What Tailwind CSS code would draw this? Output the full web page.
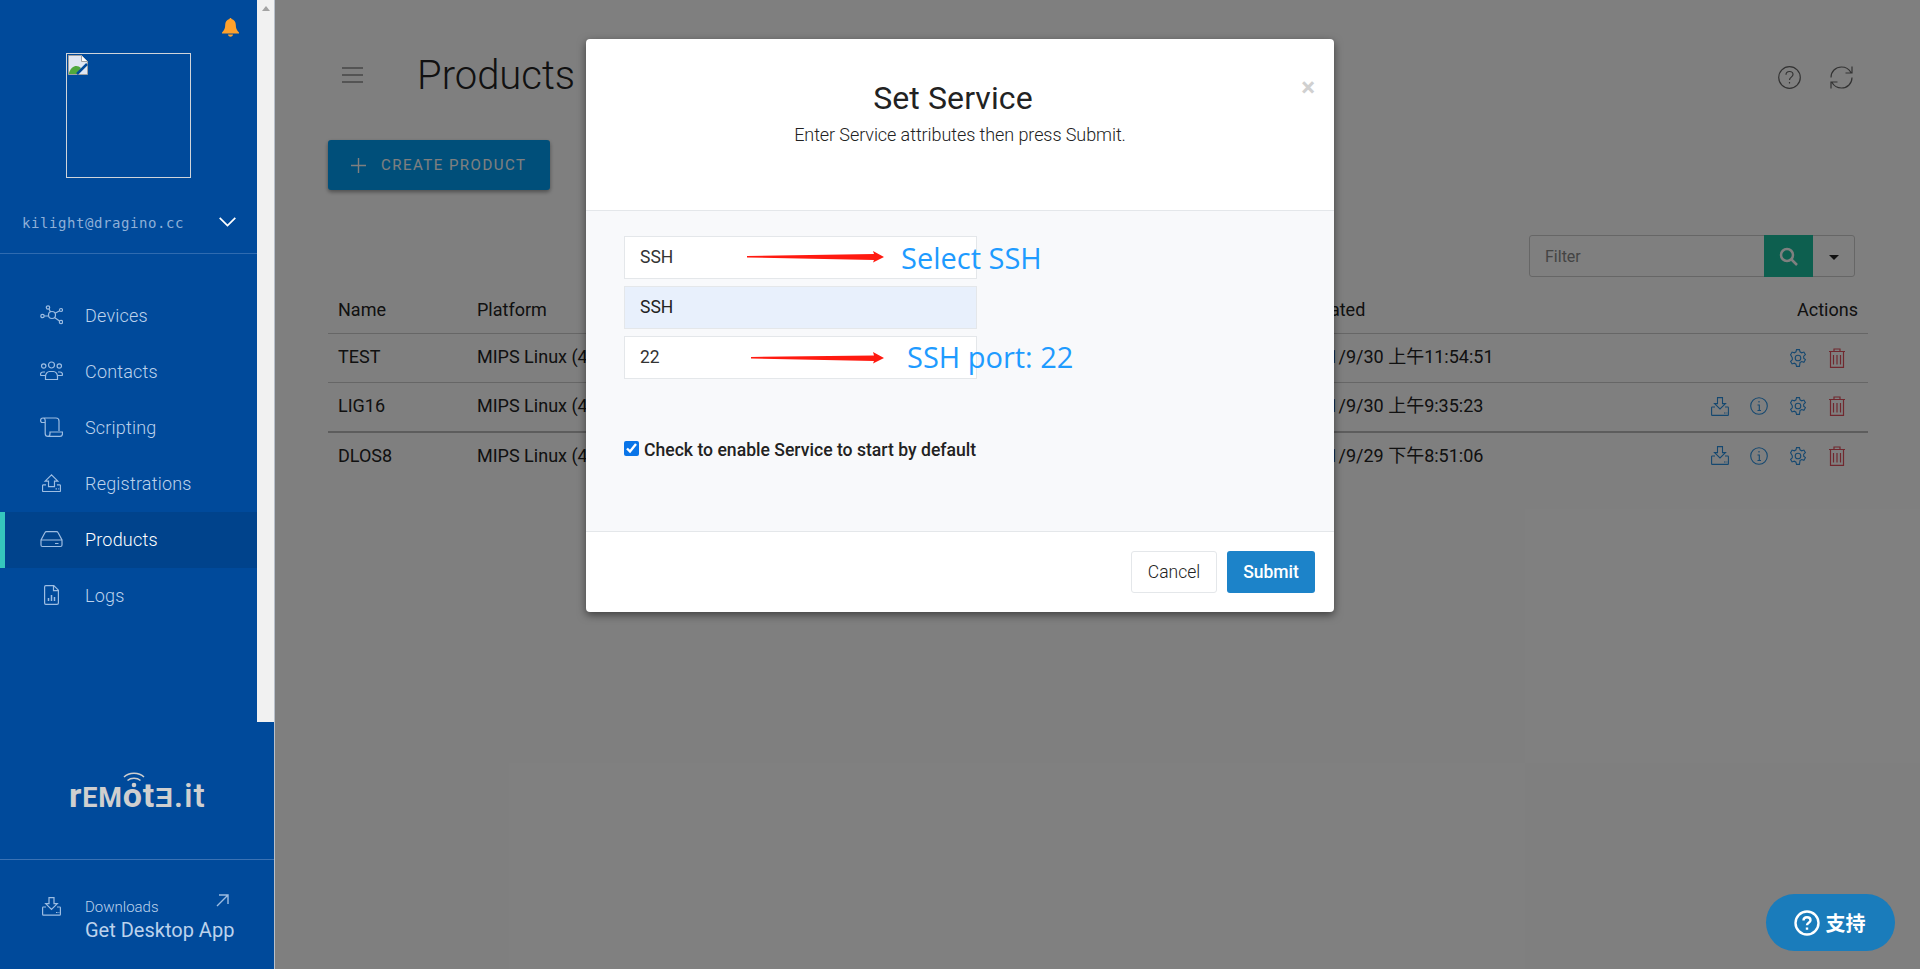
<!DOCTYPE html>
<html lang="en" class="h-[969px] overflow-hidden">
<head>
  <meta charset="UTF-8" />
  <title>Products</title>
  <script src="https://cdn.jsdelivr.net/npm/@tailwindcss/browser@4"></script>
</head>
<body class="h-[969px] bg-white text-[#222] font-['Roboto',sans-serif] overflow-hidden">
<div class="relative flex h-[969px] w-[1920px] overflow-hidden">

  <!-- sidebar -->
  <aside class="flex h-full w-[275px] shrink-0 flex-col bg-[#004a9b] border-r border-[#b8c0ca]">
    <div class="flex h-[722px] shrink-0">
      <div class="w-[257px] shrink-0">
        <div class="flex h-[53px] justify-end pr-[18px] pt-[18px]">
          <svg class="h-[19px] w-[17px]" viewBox="0 0 17 19" fill="#ffa12b"><path d="M8.500 0c.7 0 1 .5 1 1.100C12 1.700 13.800 3.900 13.800 6.800c0 3.600.8 5.200 3.200 7.600v1.100H0v-1.100c2.400-2.400 3.200-4 3.200-7.600 0-2.900 1.800-5.100 4.300-5.700 0-.6.300-1.100 1-1.100z"/><path d="M6 16.500h5c0 1.200-1 2.200-2.500 2.200S6 17.700 6 16.500z"/></svg>
        </div>
        <div class="ml-[66px] h-[125px] w-[125px] border border-[#d0d4da] p-[1px]">
          <svg width="20" height="20" viewBox="0 0 20 20"><path d="M.5.5h13l6 6v13H.5z" fill="#dfe6f2" stroke="#a0a0a0"/><path d="M13.500.5v6h6" fill="#fff" stroke="#a0a0a0"/><path d="M1 18c2-7 8-9 12-5l-4 6H1z" fill="#4fa83d"/><path d="M9 19l10-10" stroke="#004a9b" stroke-width="2.500"/></svg>
        </div>
        <div class="flex h-[75px] items-center justify-between pl-[22px] pr-[21px] pt-[14px]">
          <span class="font-['DejaVu_Sans_Mono',monospace] text-[14px] tracking-[0.57px] text-[#8fb0d8] mt-[2px]">kilight@dragino.cc</span>
          <svg class="mb-[2px] h-[10px] w-[17px]" viewBox="0 0 17 10" fill="none" stroke="#fff" stroke-width="1.700"><path d="M.7.8l7.800 7.800L16.300.8"/></svg>
        </div>
        <div class="h-px bg-[#2f6bb0]"></div>

        <nav class="mt-[34px] flex flex-col text-[18px] font-light tracking-[0.2px] text-[#bcd2ec]">
          <a class="flex h-[56px] items-center pb-[2px] pl-[40px]">
            <svg class="mr-[22px] h-[20px] w-[23px]" viewBox="0 0 23 20" fill="none" stroke="#9dbde2" stroke-width="1.200"><circle cx="12" cy="10" r="3.500"/><circle cx="8" cy="2.500" r="1.700"/><circle cx="21" cy="5" r="1.500"/><circle cx="21" cy="17" r="1.700"/><circle cx="2.500" cy="11" r="1.700"/><path d="M9 4l1.500 3M19.700 5.800L15 8.300M19.500 16l-5-3.500M4.200 11h4.300"/></svg>
            Devices
          </a>
          <a class="flex h-[56px] items-center pb-[2px] pl-[40px]">
            <svg class="mr-[22px] h-[20px] w-[23px]" viewBox="0 0 23 20" fill="none" stroke="#9dbde2" stroke-width="1.200"><circle cx="11.500" cy="4" r="3"/><circle cx="3.700" cy="5" r="2.200"/><circle cx="19.300" cy="5" r="2.200"/><path d="M5.500 18.500v-3c0-3 2-5 4-5h4c2 0 4 2 4 5v3zM5 11H3c-1.500 0-2.500 1-2.500 2.500 0 0 0 1 1 1h4M18 11h2c1.500 0 2.500 1 2.500 2.500 0 0 0 1-1 1h-4"/></svg>
            Contacts
          </a>
          <a class="flex h-[56px] items-center pb-[2px] pl-[40px]">
            <svg class="mr-[22px] h-[20px] w-[23px]" viewBox="0 0 23 20" fill="none" stroke="#9dbde2" stroke-width="1.200"><path d="M3 1h13c2 0 3 1.500 3 3v10M3 1C1.500 1 .6 2 .6 3.500c0 1 .6 2 1.600 2H5M3 1c1.500 0 2.200 1.300 2.200 2.500V16.500c0 1.500 1 2.900 2.800 2.900h12c1.800 0 2.500-1.500 2.500-2.900V15H10v1.500c0 1.500-.7 2.900-2 2.900"/></svg>
            Scripting
          </a>
          <a class="flex h-[56px] items-center pb-[2px] pl-[42px]">
            <svg class="mr-[24px] h-[20px] w-[19px]" viewBox="0 0 21 20" fill="none" stroke="#9dbde2" stroke-width="1.300"><path d="M10.500 1L3.500 8h3.700v6h6.600V8h3.700z"/><path d="M4.500 12H1.500C1 12 .6 12.500.6 13v5.500c0 .5.400.9.900.9h18c.5 0 .9-.4.900-.9V13c0-.5-.4-1-.9-1h-3"/><path d="M15 16.500h1.500M18 16.500h1"/></svg>
            Registrations
          </a>
          <a class="relative flex h-[56px] items-center bg-[#00438c] pb-[2px] pl-[40px] text-white">
            <span class="absolute left-0 top-0 h-full w-[5px] bg-[#35c7bd]"></span>
            <svg class="mr-[22px] h-[20px] w-[23px]" viewBox="0 0 23 20" fill="none" stroke="#9dbde2" stroke-width="1.200"><path d="M1 11L5 3.500c.3-.6.800-.9 1.500-.9h10c.7 0 1.200.3 1.500.9l4 7.500v5c0 1-.8 1.500-1.500 1.500h-18C1.800 17.500 1 17 1 16zM1 11h21M15 14.500h3.500"/></svg>
            Products
          </a>
          <a class="flex h-[56px] items-center pb-[2px] pl-[44px]">
            <svg class="mr-[26px] h-[20px] w-[15px]" viewBox="0 0 15 20" fill="none" stroke="#9dbde2" stroke-width="1.200"><path d="M1.800.6h8l4.600 4.600v12.700c0 .8-.6 1.400-1.400 1.400H1.800c-.7 0-1.200-.6-1.200-1.400V2c0-.8.500-1.400 1.200-1.400zM9.500.6v5h5"/><path d="M4.500 16v-3M7.500 16v-6M10.500 16v-4" stroke-width="1.500"/></svg>
            Logs
          </a>
        </nav>
      </div>
      <div class="relative w-[18px] bg-[#f1f1f1]">
        <span class="absolute left-[5px] top-[6px] h-0 w-0 border-x-[4px] border-b-[5px] border-x-transparent border-b-[#a3a3a3]"></span>
      </div>
    </div>

    <div class="flex flex-1 flex-col">
      <div class="flex h-[137px] shrink-0 items-start pl-[69px] pt-[53px]">
        <div class="relative flex items-baseline font-bold leading-[40px] tracking-[0.800px] text-[#cfcfcf]">
          <svg class="absolute left-[54px] top-[-4px] h-[19px] w-[22px]" viewBox="0 0 22 19" fill="none" stroke="#cfcfcf" stroke-width="1.500"><path d="M1 6c5-5 15-5 20 0M4.500 9.500c3.500-3 9.500-3 13 0"/><circle cx="11" cy="14" r="2.300" fill="#cfcfcf" stroke="none"/></svg>
          <span class="text-[34px]">r</span><span class="text-[27px]">EM</span><span class="text-[34px]">ot</span><span class="text-[27px]">Ǝ</span><span class="text-[34px] font-medium">.it</span>
        </div>
      </div>
      <div class="h-px bg-[#3a72b4]"></div>
      <div class="relative flex pl-[42px] pt-[37px]">
        <svg class="mr-[24px] h-[19px] w-[19px]" viewBox="0 0 19 19" fill="none" stroke="#9dbde2" stroke-width="1.200"><path d="M7 .7h5v6h3.300L9.500 12.500 3.700 6.700H7z"/><path d="M4 10H1.300c-.4 0-.7.400-.7.800v6.500c0 .5.300.9.800.9h16.200c.5 0 .8-.4.800-.9v-6.500c0-.4-.3-.8-.7-.8H15M14 15.500h1.500M16.500 15.500h.8"/></svg>
        <div class="flex flex-col text-[#bcd2ec]">
          <span class="text-[15px] font-light leading-[20px]">Downloads</span>
          <span class="text-[20px] leading-[26px]">Get Desktop App</span>
        </div>
        <svg class="absolute left-[216px] top-[34px] h-[13px] w-[13px]" viewBox="0 0 13 13" fill="none" stroke="#9dbde2" stroke-width="1.400"><path d="M1 12L12 1M3 1h9v9"/></svg>
      </div>
    </div>
  </aside>

  <!-- page under the dialog -->
  <main class="w-[1645px] pl-[53px] pr-[52px] pt-[50px]">
    <div class="flex h-[50px] items-center">
      <svg class="ml-[14px] h-[16px] w-[21px]" viewBox="0 0 21 16" stroke="#555" stroke-width="1.200"><path d="M0 1h21M0 8h21M0 15h21"/></svg>
      <h1 class="ml-[54px] mt-[2px] text-[40px] font-light">Products</h1>
      <div class="ml-auto mr-[15px] mt-[4px] flex items-center gap-[29px]">
        <svg class="h-[23px] w-[23px]" viewBox="0 0 23 23" fill="none" stroke="#666" stroke-width="1.200"><circle cx="11.500" cy="11.500" r="10.800"/><path d="M8 8.800c0-2 1.500-3.300 3.500-3.300s3.500 1.300 3.500 3c0 2.800-3.500 2.500-3.500 5.500M11.500 16v1.500"/></svg>
        <svg class="h-[23px] w-[23px]" viewBox="0 0 23 23" fill="none" stroke="#666" stroke-width="1.200"><path d="M1 11.500C1 5.500 5.500 1 11.500 1c4 0 7.500 2 9.500 5.500M22 11.500c0 6-4.500 10.500-10.500 10.500-4 0-7.500-2-9.500-5.500M22 .5v6.500h-6.500M1 22.500V16h6.500"/></svg>
      </div>
    </div>

    <button class="mt-[40px] flex h-[50px] w-[222px] items-center rounded-[3px] bg-[#019ff5] pl-[23px] text-white shadow-[0_2px_4px_rgba(0,0,0,0.4)]">
      <svg class="mr-[15px] h-[15px] w-[15px]" viewBox="0 0 15 15" stroke="#fff" stroke-width="1.400"><path d="M7.500 0v15M0 7.500h15"/></svg>
      <span class="text-[15px] tracking-[1.480px]">CREATE PRODUCT</span>
    </button>

    <div class="mt-[45px] flex justify-end pr-[13px]">
      <div class="flex h-[42px] w-[326px] rounded-[3px] border border-[#ccc]">
        <div class="flex-1 pl-[15px] pt-[1px] text-[16px] leading-[40px] text-[#888]">Filter</div>
        <div class="mt-[-1px] flex h-[42px] w-[49px] items-center justify-center bg-[#1abe9e]">
          <svg class="h-[19px] w-[19px]" viewBox="0 0 19 19" fill="none" stroke="#fff" stroke-width="2.500"><circle cx="8" cy="8" r="6"/><path d="M12.500 12.500l5.500 5.500"/></svg>
        </div>
        <div class="flex w-[41px] items-center justify-center pt-[2px]">
          <span class="h-0 w-0 border-x-[5px] border-t-[5px] border-x-transparent border-t-[#222]"></span>
        </div>
      </div>
    </div>

    <div class="text-[18px]">
      <div class="grid h-[57px] grid-cols-[139px_821px_1fr_auto] items-end border-b border-[#ccc] px-[10px] pb-[10px]">
        <span>Name</span><span>Platform</span><span>Updated</span><span>Actions</span>
      </div>
      <div class="grid h-[49px] grid-cols-[139px_821px_1fr_auto] items-center border-b border-[#ccc] pb-[4px] pl-[10px] pr-[12px]">
        <span>TEST</span><span>MIPS Linux (4.14)</span><span class="font-['Roboto','Noto_Sans_CJK_SC',sans-serif]">2021/9/30 上午11:54:51</span>
        <div class="mt-[4px] flex h-[20px] w-[157px] items-center justify-end">
          <span class="flex w-[39px] justify-center"><svg class="h-[18px] w-[18px]" viewBox="0 0 17 18" fill="none" stroke="#2a90e0" stroke-width="1.100"><path d="M7 .6h3l.5 2.200 1.700 1 2.200-.7 1.500 2.600-1.700 1.500v2l1.700 1.500-1.500 2.600-2.200-.7-1.700 1L10 17.400H7l-.5-2.200-1.700-1-2.200.7-1.500-2.600 1.700-1.500v-2L1.100 5.700l1.500-2.600 2.200.7 1.700-1z"/><circle cx="8.500" cy="9" r="2.800"/></svg></span>
          <span class="flex w-[39px] justify-center"><svg class="h-[20px] w-[16px]" viewBox="0 0 16 20" fill="none" stroke="#e0505c" stroke-width="1.200"><path d="M0 3.500h16M5 3.500V1h6v2.500M1.500 3.500v15.900h13V3.500M4.500 7v9.500M8 7v9.500M11.500 7v9.500"/></svg></span>
        </div>
      </div>
      <div class="grid h-[50px] grid-cols-[139px_821px_1fr_auto] items-center border-b-2 border-[#bbb] pb-[4px] pl-[10px] pr-[12px]">
        <span>LIG16</span><span>MIPS Linux (4.14)</span><span class="font-['Roboto','Noto_Sans_CJK_SC',sans-serif]">2021/9/30 上午9:35:23</span>
        <div class="mt-[2px] flex h-[20px] w-[157px] items-center justify-end">
          <span class="flex w-[39px] justify-center"><svg class="h-[19px] w-[18px]" viewBox="0 0 18 19" fill="none" stroke="#2a90e0" stroke-width="1.100"><path d="M6.500.6h5v6h3L9 12 3.500 6.600h3z"/><path d="M4 10H1.200c-.4 0-.6.300-.6.700v7c0 .4.200.7.600.7h15.600c.4 0 .6-.3.600-.7v-7c0-.4-.2-.7-.6-.7H14M13 16h1.500M15.500 16h.8"/></svg></span>
          <span class="flex w-[39px] justify-center"><svg class="h-[18px] w-[18px]" viewBox="0 0 18 18" fill="none" stroke="#2a90e0" stroke-width="1.100"><circle cx="9" cy="9" r="8.300"/><path d="M9 4v1.500M7.500 8H9.300v5.500M7.500 13.500h3.500"/></svg></span>
          <span class="flex w-[39px] justify-center"><svg class="h-[18px] w-[18px]" viewBox="0 0 17 18" fill="none" stroke="#2a90e0" stroke-width="1.100"><path d="M7 .6h3l.5 2.200 1.700 1 2.200-.7 1.500 2.600-1.700 1.500v2l1.700 1.500-1.500 2.600-2.200-.7-1.700 1L10 17.400H7l-.5-2.200-1.700-1-2.200.7-1.500-2.600 1.700-1.500v-2L1.100 5.700l1.500-2.600 2.200.7 1.700-1z"/><circle cx="8.500" cy="9" r="2.800"/></svg></span>
          <span class="flex w-[39px] justify-center"><svg class="h-[20px] w-[16px]" viewBox="0 0 16 20" fill="none" stroke="#e0505c" stroke-width="1.200"><path d="M0 3.500h16M5 3.500V1h6v2.500M1.500 3.500v15.900h13V3.500M4.500 7v9.500M8 7v9.500M11.500 7v9.500"/></svg></span>
        </div>
      </div>
      <div class="grid h-[49px] grid-cols-[139px_821px_1fr_auto] items-center pb-[4px] pl-[10px] pr-[12px]">
        <span>DLOS8</span><span>MIPS Linux (4.14)</span><span class="font-['Roboto','Noto_Sans_CJK_SC',sans-serif]">2021/9/29 下午8:51:06</span>
        <div class="flex h-[20px] w-[157px] items-center justify-end">
          <span class="flex w-[39px] justify-center"><svg class="h-[19px] w-[18px]" viewBox="0 0 18 19" fill="none" stroke="#2a90e0" stroke-width="1.100"><path d="M6.500.6h5v6h3L9 12 3.500 6.600h3z"/><path d="M4 10H1.200c-.4 0-.6.300-.6.700v7c0 .4.200.7.600.7h15.600c.4 0 .6-.3.600-.7v-7c0-.4-.2-.7-.6-.7H14M13 16h1.500M15.500 16h.8"/></svg></span>
          <span class="flex w-[39px] justify-center"><svg class="h-[18px] w-[18px]" viewBox="0 0 18 18" fill="none" stroke="#2a90e0" stroke-width="1.100"><circle cx="9" cy="9" r="8.300"/><path d="M9 4v1.500M7.500 8H9.300v5.500M7.500 13.500h3.500"/></svg></span>
          <span class="flex w-[39px] justify-center"><svg class="h-[18px] w-[18px]" viewBox="0 0 17 18" fill="none" stroke="#2a90e0" stroke-width="1.100"><path d="M7 .6h3l.5 2.200 1.700 1 2.200-.7 1.500 2.600-1.700 1.500v2l1.700 1.500-1.500 2.600-2.200-.7-1.700 1L10 17.400H7l-.5-2.200-1.700-1-2.200.7-1.500-2.600 1.700-1.500v-2L1.100 5.700l1.500-2.600 2.200.7 1.700-1z"/><circle cx="8.500" cy="9" r="2.800"/></svg></span>
          <span class="flex w-[39px] justify-center"><svg class="h-[20px] w-[16px]" viewBox="0 0 16 20" fill="none" stroke="#e0505c" stroke-width="1.200"><path d="M0 3.500h16M5 3.500V1h6v2.500M1.500 3.500v15.900h13V3.500M4.500 7v9.500M8 7v9.500M11.500 7v9.500"/></svg></span>
        </div>
      </div>
    </div>
  </main>

  <!-- backdrop, stops at the sidebar -->
  <div class="absolute inset-y-0 left-[275px] right-0 bg-black/50"></div>

  <!-- dialog -->
  <div class="absolute left-[586px] top-[39px] flex h-[573px] w-[748px] flex-col rounded-[4px] bg-white shadow-[0_3px_9px_rgba(0,0,0,0.5)]">
    <div class="relative h-[172px] shrink-0 border-b border-[#e4e7ea] pt-[37px] text-center">
      <h2 class="pr-[14px] text-[32px] leading-[44px] tracking-[0.1px]">Set Service</h2>
      <p class="mt-[3px] text-[18px] font-light leading-[24px] tracking-[-0.08px] text-[#222]">Enter Service attributes then press Submit.</p>
      <span class="absolute right-[19px] top-[32px] text-[26px] font-bold leading-[32px] text-[#d0d0d0]">×</span>
    </div>

    <div class="relative flex-1 bg-[#f8f9fb] px-[38px] pt-[25px]">
      <div class="flex h-[43px] w-[353px] items-center border border-[#e4e7ea] bg-white pl-[15px] text-[17.500px] text-[#333]">SSH</div>
      <div class="mt-[7px] flex h-[43px] w-[353px] items-center border border-[#e4e7ea] bg-[#e8f0fc] pl-[15px] text-[17.500px] text-[#222]">SSH</div>
      <div class="mt-[7px] flex h-[43px] w-[353px] items-center border border-[#e4e7ea] bg-white pl-[15px] text-[17.500px] text-[#333]">22</div>
      <label class="mt-[59px] flex items-center text-[17.600px] font-medium leading-[24px] text-[#222]">
        <input type="checkbox" checked class="mb-[3px] mr-[5px] h-[15px] w-[15px] accent-[#0a75e8]" />
        Check to enable Service to start by default
      </label>

      <!-- annotations drawn on top of the screenshot -->
      <svg class="absolute left-[161px] top-[39px] h-[14px] w-[137px]" viewBox="0 0 137 14" fill="#ff1a10"><path d="M0 6v1.500L127 10l-1 2.500 11-5.500-11-6 1 3z"/></svg>
      <span class="absolute left-[315px] top-[25px] font-['Open_Sans',sans-serif] text-[29px] leading-[44px] text-[#1e9bff]">Select SSH</span>
      <svg class="absolute left-[165px] top-[140px] h-[14px] w-[133px]" viewBox="0 0 133 14" fill="#ff1a10"><path d="M0 6v1.500L123 10l-1 2.500 11-5.500-11-6 1 3.500z"/></svg>
      <span class="absolute left-[321px] top-[124px] font-['Open_Sans',sans-serif] text-[29px] leading-[44px] text-[#1e9bff]">SSH port: 22</span>
    </div>

    <div class="flex h-[81px] shrink-0 items-start justify-end gap-[10px] border-t border-[#e4e7ea] pr-[19px] pt-[19px]">
      <button class="h-[42px] w-[86px] rounded-[3px] border border-[#e4e7ea] bg-white text-[17.500px] font-light text-[#222]">Cancel</button>
      <button class="h-[42px] w-[88px] rounded-[3px] bg-[#1c83c9] text-[17.500px] font-medium text-white">Submit</button>
    </div>
  </div>

  <!-- support button -->
  <div class="absolute left-[1766px] top-[894px] flex h-[57px] w-[129px] items-center justify-center gap-[6px] rounded-full bg-[#1a7cbb] pr-[2px] text-white">
    <svg class="h-[26px] w-[26px]" viewBox="0 0 26 26" fill="none" stroke="#fff" stroke-width="2.400"><circle cx="13" cy="13" r="11.500"/><path d="M9.500 10.500c0-2 1.500-3.300 3.500-3.300s3.500 1.300 3.500 3c0 2.600-3.500 2.500-3.500 5M13 17.500v2.200"/></svg>
    <span class="font-['Noto_Sans_CJK_SC',sans-serif] text-[20px] font-bold">支持</span>
  </div>
</div>
</body>
</html>
